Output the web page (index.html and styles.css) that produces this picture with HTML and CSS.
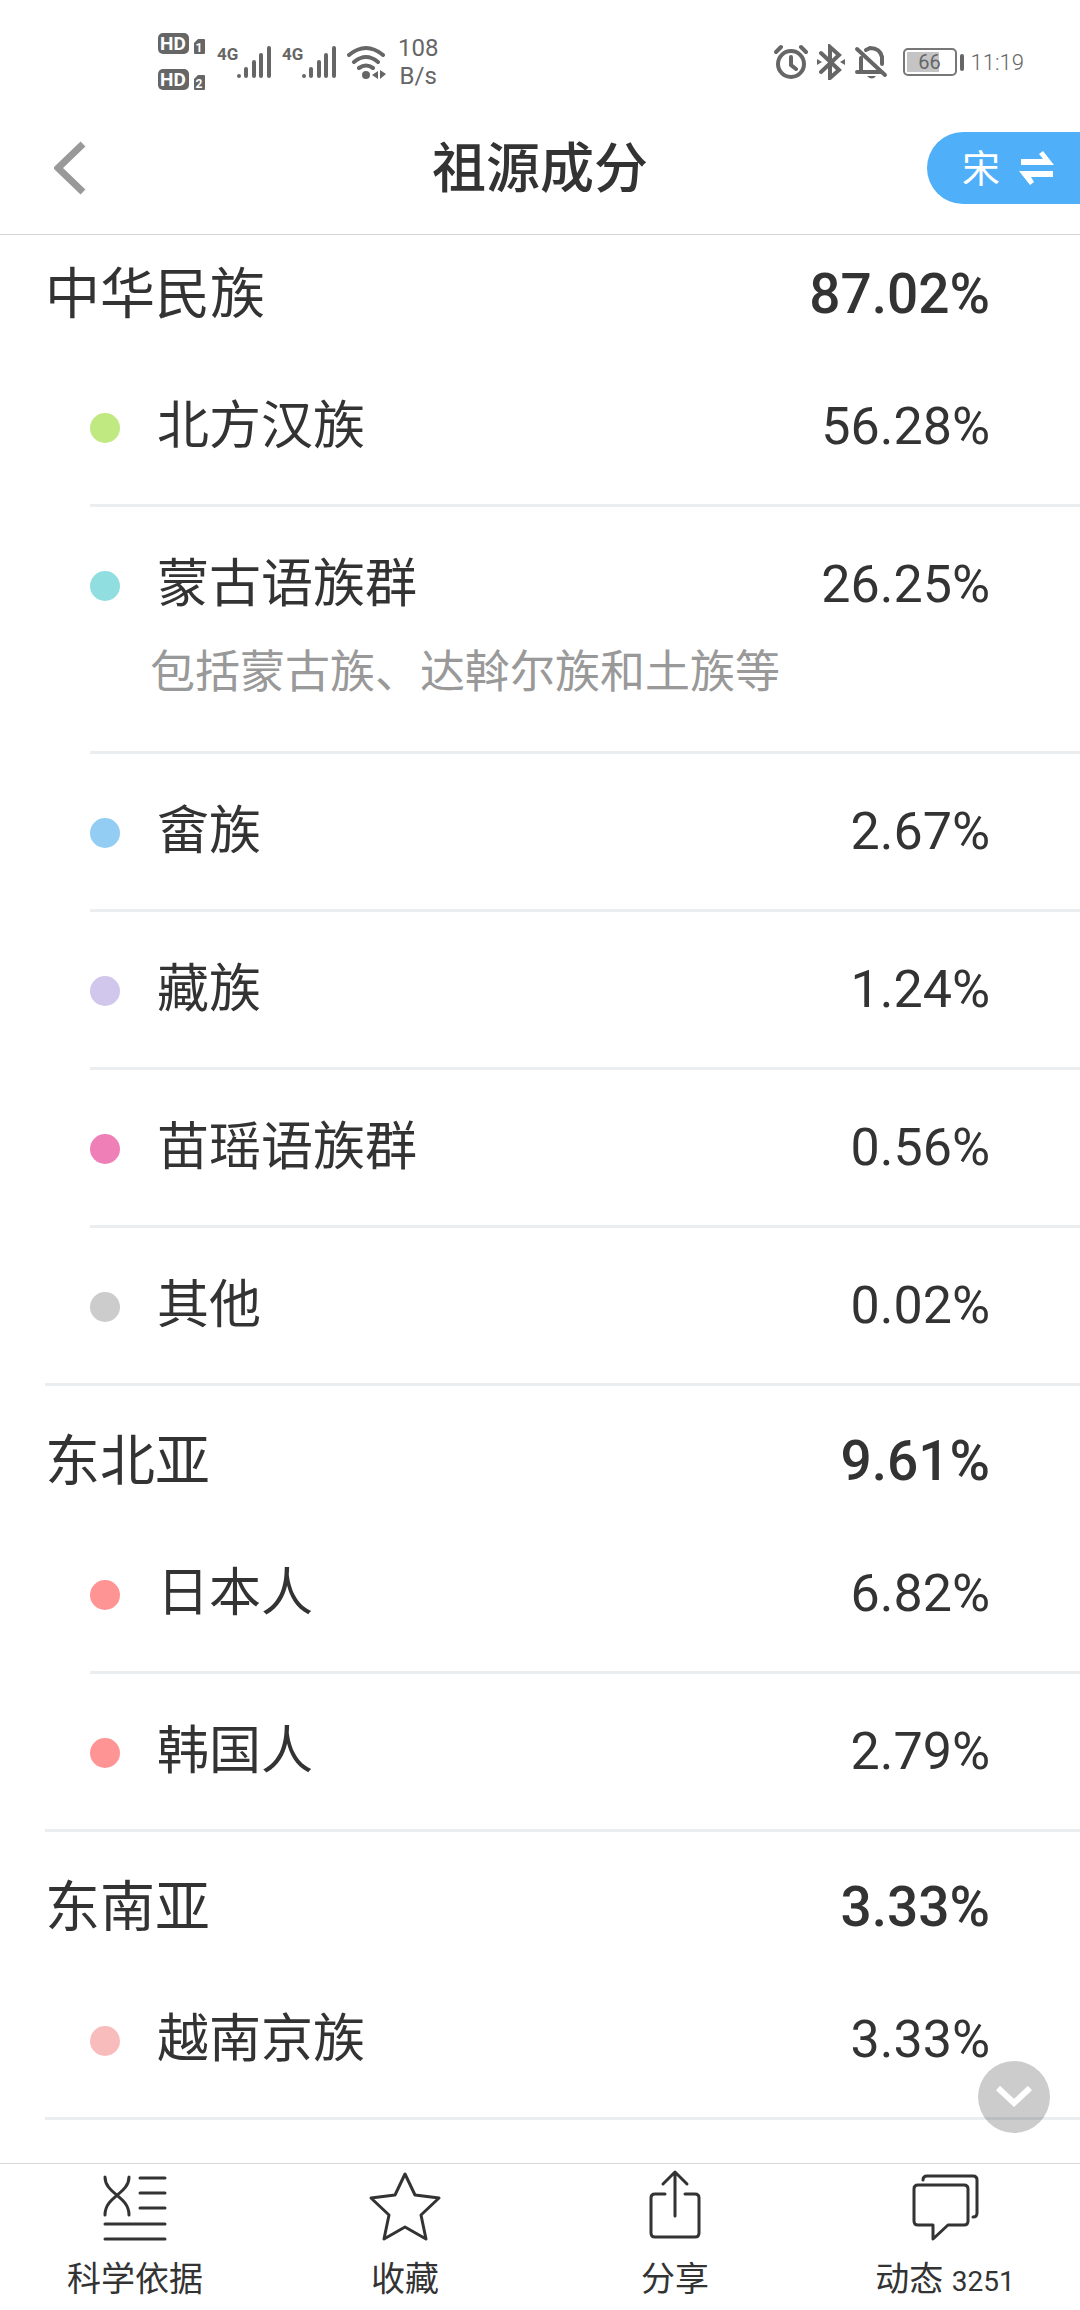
FILE: index.html
```html
<!DOCTYPE html>
<html lang="zh-CN">
<head>
    <meta charset="UTF-8">
    <meta name="viewport" content="width=device-width, initial-scale=1.0">
    <title>祖源成分</title>
    <link rel="stylesheet" href="styles.css">
</head>
<body>
    <div class="status-bar">
        <div class="status-left">
            <svg class="sim" width="50" height="60" viewBox="0 0 50 60">
                <rect x="0" y="1" width="31" height="21" rx="5"/>
                <text x="15" y="18" class="hd">HD</text>
                <path d="M36 11l4-4h6a1 1 0 0 1 1 1v13a1 1 0 0 1-1 1h-9a1 1 0 0 1-1-1z"/>
                <text x="41" y="20" class="num">1</text>
                <rect x="0" y="37" width="31" height="21" rx="5"/>
                <text x="15" y="54" class="hd">HD</text>
                <path d="M36 47l4-4h6a1 1 0 0 1 1 1v13a1 1 0 0 1-1 1h-9a1 1 0 0 1-1-1z"/>
                <text x="41" y="56" class="num">2</text>
            </svg>
            <svg width="56" height="36" viewBox="0 0 56 36">
                <text x="0" y="16" class="net">4G</text>
                <path class="bars" d="M22 32v0M29 25v7M37 18v14M44 11v21M52 4v28"/>
            </svg>
            <svg width="56" height="36" viewBox="0 0 56 36">
                <text x="0" y="16" class="net">4G</text>
                <path class="bars" d="M22 32v0M29 25v7M37 18v14M44 11v21M52 4v28"/>
            </svg>
            <svg width="42" height="36" viewBox="0 0 42 36">
                <path class="line" d="M2 11Q19-3 36 11M7 18Q19 8 31 18M12 24Q19 19 26 24"/>
                <circle cx="19" cy="31" r="4"/>
                <path d="M25 31l6-4v8zM33 26l6 4-6 5z"/>
            </svg>
            <div class="speed">108<br>B/s</div>
        </div>
        <div class="status-right">
            <svg width="34" height="36" viewBox="0 0 34 36">
                <circle class="line" cx="17" cy="20" r="13"/>
                <path class="line" d="M2 8l5-5M32 8l-5-5M17 13v8l5 4"/>
            </svg>
            <svg width="28" height="36" viewBox="0 0 28 36">
                <path class="line" d="M4 9l18 17-9 8V3l9 8L4 28"/>
                <path d="M0 15l5 3-5 3zM28 15l-5 3 5 3z"/>
            </svg>
            <svg width="34" height="36" viewBox="0 0 34 36">
                <path class="line" d="M3 5l28 26M3 28h23M7 27V14M12 6l4-2q10 0 12 9v7"/>
                <path d="M13 32h9q-4 5-9 0z"/>
            </svg>
            <div class="battery"><span>66</span></div>
            <div class="time">11:19</div>
        </div>
    </div>

    <header class="header">
        <button class="back" aria-label="返回">
            <svg width="32" height="54" viewBox="0 0 32 54"><path d="M29 3L4 27l25 24"/></svg>
        </button>
        <h1>祖源成分</h1>
        <button class="switch">
            <span>宋</span>
            <svg width="36" height="34" viewBox="0 0 36 34">
                <path d="M2 8h22l-4-5 4-3 11 14H2zM34 26H12l3 5-4 3L0 20h34z"/>
            </svg>
        </button>
    </header>

    <main class="content">
        <section class="group">
            <h2 class="group-title"><span>中华民族</span><span>87.02%</span></h2>
            <ul>
                <li class="item">
                    <div class="row"><i class="dot green"></i><span class="name">北方汉族</span><span>56.28%</span></div>
                </li>
                <li class="item">
                    <div class="row"><i class="dot teal"></i><span class="name">蒙古语族群</span><span>26.25%</span></div>
                    <p class="note">包括蒙古族、达斡尔族和土族等</p>
                </li>
                <li class="item">
                    <div class="row"><i class="dot blue"></i><span class="name">畲族</span><span>2.67%</span></div>
                </li>
                <li class="item">
                    <div class="row"><i class="dot purple"></i><span class="name">藏族</span><span>1.24%</span></div>
                </li>
                <li class="item">
                    <div class="row"><i class="dot pink"></i><span class="name">苗瑶语族群</span><span>0.56%</span></div>
                </li>
                <li class="item">
                    <div class="row"><i class="dot gray"></i><span class="name">其他</span><span>0.02%</span></div>
                </li>
            </ul>
        </section>
        <section class="group">
            <h2 class="group-title"><span>东北亚</span><span>9.61%</span></h2>
            <ul>
                <li class="item">
                    <div class="row"><i class="dot red"></i><span class="name">日本人</span><span>6.82%</span></div>
                </li>
                <li class="item">
                    <div class="row"><i class="dot red"></i><span class="name">韩国人</span><span>2.79%</span></div>
                </li>
            </ul>
        </section>
        <section class="group">
            <h2 class="group-title"><span>东南亚</span><span>3.33%</span></h2>
            <ul>
                <li class="item">
                    <div class="row"><i class="dot rose"></i><span class="name">越南京族</span><span>3.33%</span></div>
                </li>
            </ul>
        </section>
    </main>

    <button class="to-bottom" aria-label="到底部">
        <svg width="36" height="22" viewBox="0 0 36 22"><path d="M2 2l16 15L34 2"/></svg>
    </button>

    <nav class="tab-bar">
        <a href="#science">
            <svg width="72" height="72" viewBox="0 0 72 72">
                <path d="M6 5C6 22 30 24 30 43M30 5C30 22 6 24 6 43M41 6h25M41 21h25M41 36h25M6 52h60M6 67h60"/>
            </svg>
            <span>科学依据</span>
        </a>
        <a href="#favorite">
            <svg width="72" height="72" viewBox="0 0 72 72">
                <path d="M36 2l10 21 24 3-18 17 5 24-21-12-21 12 5-24L2 26l24-3z"/>
            </svg>
            <span>收藏</span>
        </a>
        <a href="#share">
            <svg width="72" height="72" viewBox="0 0 72 72">
                <path d="M26 22H16q-4 0-4 4v35q0 4 4 4h40q4 0 4-4V26q0-4-4-4H46M36 44V1M24 12L36 0l12 12"/>
            </svg>
            <span>分享</span>
        </a>
        <a href="#news">
            <svg width="72" height="72" viewBox="0 0 72 72">
                <path d="M9 13h46q4 0 4 4v32q0 4-4 4H39L24 67V53H9q-4 0-4-4V17q0-4 4-4zM14 8q0-4 4-4h46q4 0 4 4v33q0 4-4 4"/>
            </svg>
            <span>动态 <small>3251</small></span>
        </a>
    </nav>
</body>
</html>
```
FILE: styles.css
```css
* {
    box-sizing: border-box;
}
body {
    margin: 0;
    min-height: 100vh;
    display: flex;
    flex-direction: column;
    position: relative;
    background: #fff;
    color: #333;
    font-family: Roboto, "Noto Sans CJK SC", sans-serif;
}
h1, h2, p, ul {
    margin: 0;
    padding: 0;
}
ul {
    list-style: none;
}
button {
    border: none;
    padding: 0;
    background: none;
    font-family: inherit;
    cursor: pointer;
}
svg {
    display: block;
    flex: none;
}

/* status bar */
.status-bar {
    height: 102px;
    padding: 22px 56px 0 158px;
    display: flex;
    justify-content: space-between;
    align-items: center;
    color: #666;
    fill: #666;
}
.status-left, .status-right {
    display: flex;
    align-items: center;
    height: 80px;
    gap: 9px;
}
.status-bar .line, .status-bar .bars {
    fill: none;
    stroke: #666;
    stroke-width: 4;
    stroke-linecap: round;
}
.sim text {
    fill: #fff;
    font-weight: 700;
    text-anchor: middle;
}
.sim .hd {
    font-size: 19px;
}
.sim .num {
    font-size: 12px;
}
.net {
    font-size: 17px;
    font-weight: 700;
}
.speed {
    font-size: 24px;
    line-height: 28px;
    text-align: center;
}
.battery {
    width: 54px;
    height: 28px;
    margin: 0 5px 0 6px;
    border: 2px solid #777;
    border-radius: 5px;
    padding: 2px;
    position: relative;
    text-align: center;
    font-size: 20px;
    line-height: 20px;
    background: linear-gradient(#c4c4c4, #c4c4c4) 2px 2px / 32px 20px no-repeat;
}
.battery::after {
    content: "";
    position: absolute;
    right: -9px;
    top: 4px;
    width: 4px;
    height: 17px;
    border-radius: 2px;
    background: #666;
}
.time {
    font-size: 22px;
    font-weight: 300;
}

/* header */
.header {
    height: 133px;
    display: flex;
    justify-content: space-between;
    align-items: center;
    border-bottom: 1px solid #d5d5d5;
}
.back {
    width: 153px;
    padding-left: 54px;
}
.back path {
    fill: none;
    stroke: #999;
    stroke-width: 7;
}
.header h1 {
    padding-bottom: 8px;
    font-size: 54px;
    font-weight: 500;
}
.switch {
    width: 153px;
    height: 72px;
    padding-left: 35px;
    display: flex;
    align-items: center;
    gap: 19px;
    border-radius: 36px 0 0 36px;
    background: #4fb0f9;
    color: #fff;
    fill: #fff;
    font-size: 38px;
}
.switch span {
    padding-bottom: 6px;
}

/* list */
.content {
    flex: 1;
    padding-bottom: 40px;
}
.group {
    margin-left: 45px;
}
.group + .group {
    border-top: 3px solid #eaeef1;
}
.group:last-child {
    border-bottom: 3px solid #eaeef1;
}
.group-title {
    display: flex;
    justify-content: space-between;
    padding: 35px 90px 15px 0;
    font-size: 55px;
    font-weight: 500;
    line-height: 80px;
}
.group-title span:first-child {
    font-weight: 400;
}
.group:first-child .group-title {
    padding-top: 19px;
}
.item {
    margin-left: 45px;
    padding: 38px 90px 37px 0;
}
.item + .item {
    border-top: 3px solid #eaeef1;
}
.row {
    display: flex;
    align-items: center;
    font-size: 52px;
    line-height: 80px;
}
.dot {
    width: 30px;
    height: 30px;
    margin: 2px 37px 0 0;
    border-radius: 50%;
}
.name {
    flex: 1;
}
.note {
    margin: 15px 0 0 60px;
    padding-bottom: 8px;
    color: #999;
    font-size: 45px;
    line-height: 66px;
}
.green { background: #c0e982; }
.teal { background: #90dee0; }
.blue { background: #93cdf4; }
.purple { background: #d1c6ec; }
.pink { background: #ef7fb7; }
.gray { background: #ccc; }
.red { background: #ff9494; }
.rose { background: #f9bcbc; }

.to-bottom {
    position: absolute;
    right: 30px;
    bottom: 177px;
    width: 72px;
    height: 72px;
    display: flex;
    align-items: center;
    justify-content: center;
    border-radius: 50%;
    background: rgba(0, 0, 0, 0.2);
}
.to-bottom path {
    fill: none;
    stroke: #fff;
    stroke-width: 6;
}

/* tabs */
.tab-bar {
    height: 147px;
    display: grid;
    grid-template-columns: repeat(4, 1fr);
    border-top: 1px solid #d9d9d9;
}
.tab-bar a {
    display: flex;
    flex-direction: column;
    align-items: center;
    gap: 10px;
    padding-top: 8px;
    color: #333;
    font-size: 34px;
    line-height: 50px;
    text-decoration: none;
}
.tab-bar svg {
    overflow: visible;
    fill: none;
    stroke: #333;
    stroke-width: 3;
    stroke-linecap: round;
    stroke-linejoin: round;
}
.tab-bar small {
    font-size: 28px;
}
```
